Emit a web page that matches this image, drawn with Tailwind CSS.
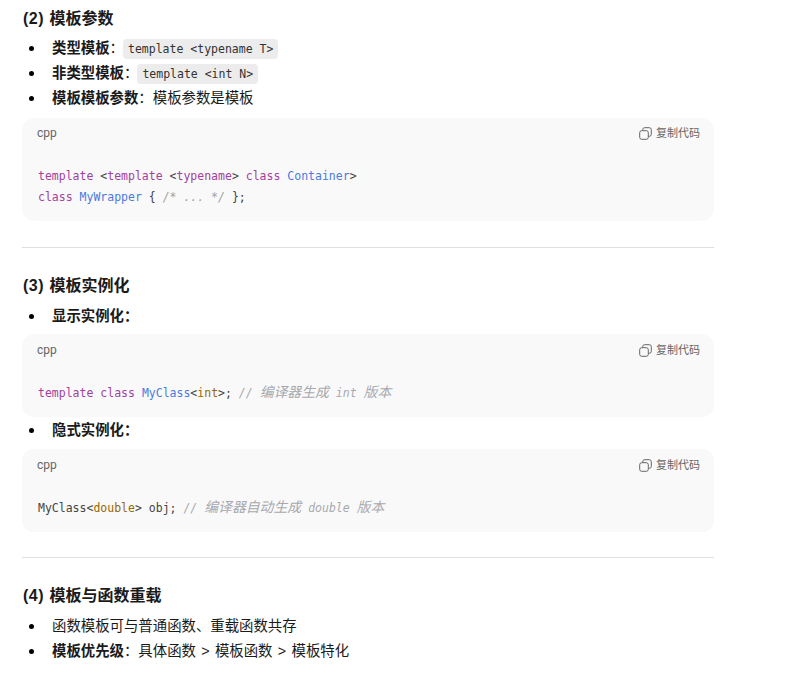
<!DOCTYPE html>
<html lang="zh">
<head>
<meta charset="utf-8">
<script src="https://cdn.jsdelivr.net/npm/@tailwindcss/browser@4"></script>
</head>
<body class="bg-white">
<main class="w-[786px] h-[683px] overflow-hidden pl-[22px] pr-[72px] text-[14.4px] text-[#1a1a1a] font-['Liberation_Sans','Noto_Sans_CJK_SC',sans-serif]">
  <h3 class="h-[24px] mt-[7px] pl-px leading-[24px] text-[16px] font-bold"><span class="tracking-[0.5px] mr-[1px]">(2)</span> 模板参数</h3>
  <ul class="mt-[5px]">
    <li class="h-[25px] flex items-center"><span class="w-[30px] flex justify-center pr-[11px]"><span class="size-[5.5px] rounded-full bg-black"></span></span><b>类型模板</b>：<code class="ml-[-1px] px-[5px] h-[20px] leading-[20px] rounded-[4px] bg-[#ececec] text-[11.5px] text-[#333] font-['DejaVu_Sans_Mono',monospace]">template &lt;typename T&gt;</code></li>
    <li class="h-[25px] flex items-center"><span class="w-[30px] flex justify-center pr-[11px]"><span class="size-[5.5px] rounded-full bg-black"></span></span><b>非类型模板</b>：<code class="ml-[-1px] px-[5px] h-[20px] leading-[20px] rounded-[4px] bg-[#ececec] text-[11.5px] text-[#333] font-['DejaVu_Sans_Mono',monospace]">template &lt;int N&gt;</code></li>
    <li class="h-[25px] flex items-center"><span class="w-[30px] flex justify-center pr-[11px]"><span class="size-[5.5px] rounded-full bg-black"></span></span><b>模板模板参数</b>：模板参数是模板</li>
  </ul>
  <section class="mt-[7px] h-[103px] rounded-[12px] bg-[#f9f9f9] pl-[15px] pr-[14px]">
    <div class="h-[30px] flex items-center justify-between text-[11px] text-[#666]">
      <span class="text-[12px] font-['Roboto',sans-serif]">cpp</span>
      <span class="flex items-center gap-[4px]"><svg class="size-[13px]" viewBox="0 0 13 13" fill="none" stroke="#666" stroke-width="1"><rect x="0.7" y="3.7" width="8.6" height="8.6" rx="2"/><path d="M3.7 3.5V2.7a2 2 0 0 1 2-2h4.6a2 2 0 0 1 2 2v4.6a2 2 0 0 1-2 2H9.5"/></svg>复制代码</span>
    </div>
    <pre class="mt-[18px] pl-px text-[11.5px] leading-[21px] text-[#444] font-['DejaVu_Sans_Mono',monospace]"><span class="text-[#a23fa0]">template</span> &lt;<span class="text-[#a23fa0]">template</span> &lt;<span class="text-[#a23fa0]">typename</span>&gt; <span class="text-[#a23fa0]">class</span> <span class="text-[#4a7ae0]">Container</span>&gt;
<span class="text-[#a23fa0]">class</span> <span class="text-[#4a7ae0]">MyWrapper</span> { <span class="text-[#a0a1a7] italic">/* ... */</span> };</pre>
  </section>
  <hr class="mt-[26px] border-t border-[#e0e0e0]">
  <h3 class="mt-[26px] pl-px h-[24px] leading-[24px] text-[16px] font-bold"><span class="tracking-[0.5px] mr-[1px]">(3)</span> 模板实例化</h3>
  <ul class="mt-[6px]">
    <li class="h-[25px] flex items-center"><span class="w-[30px] flex justify-center pr-[11px]"><span class="size-[5.5px] rounded-full bg-black"></span></span><b>显示实例化</b><b>：</b></li>
  </ul>
  <section class="mt-[5px] h-[83px] rounded-[12px] bg-[#f9f9f9] pl-[15px] pr-[14px]">
    <div class="h-[32px] flex items-center justify-between text-[11px] text-[#666]">
      <span class="text-[12px] font-['Roboto',sans-serif]">cpp</span>
      <span class="flex items-center gap-[4px]"><svg class="size-[13px]" viewBox="0 0 13 13" fill="none" stroke="#666" stroke-width="1"><rect x="0.7" y="3.7" width="8.6" height="8.6" rx="2"/><path d="M3.7 3.5V2.7a2 2 0 0 1 2-2h4.6a2 2 0 0 1 2 2v4.6a2 2 0 0 1-2 2H9.5"/></svg>复制代码</span>
    </div>
    <pre class="mt-[16px] pl-px text-[11.5px] leading-[21px] text-[#444] font-['DejaVu_Sans_Mono','Noto_Sans_CJK_SC',monospace]"><span class="text-[#a23fa0]">template</span> <span class="text-[#a23fa0]">class</span> <span class="text-[#4a7ae0]">MyClass</span>&lt;<span class="text-[#986801]">int</span>&gt;; <span class="text-[#a8a9ae] italic">// <span class="text-[13.86px]">编译器生成</span> int <span class="text-[13.86px]">版本</span></span></pre>
  </section>
  <ul class="mt-px">
    <li class="h-[25px] flex items-center"><span class="w-[30px] flex justify-center pr-[11px]"><span class="size-[5.5px] rounded-full bg-black"></span></span><b>隐式实例化</b><b>：</b></li>
  </ul>
  <section class="mt-[6px] h-[83px] rounded-[12px] bg-[#f9f9f9] pl-[15px] pr-[14px]">
    <div class="h-[32px] flex items-center justify-between text-[11px] text-[#666]">
      <span class="text-[12px] font-['Roboto',sans-serif]">cpp</span>
      <span class="flex items-center gap-[4px]"><svg class="size-[13px]" viewBox="0 0 13 13" fill="none" stroke="#666" stroke-width="1"><rect x="0.7" y="3.7" width="8.6" height="8.6" rx="2"/><path d="M3.7 3.5V2.7a2 2 0 0 1 2-2h4.6a2 2 0 0 1 2 2v4.6a2 2 0 0 1-2 2H9.5"/></svg>复制代码</span>
    </div>
    <pre class="mt-[16px] pl-px text-[11.5px] leading-[21px] text-[#444] font-['DejaVu_Sans_Mono','Noto_Sans_CJK_SC',monospace]">MyClass&lt;<span class="text-[#986801]">double</span>&gt; obj; <span class="text-[#a8a9ae] italic">// <span class="text-[13.86px]">编译器自动生成</span> double <span class="text-[13.86px]">版本</span></span></pre>
  </section>
  <hr class="mt-[25px] border-t border-[#e0e0e0]">
  <h3 class="mt-[26px] pl-px h-[24px] leading-[24px] text-[16px] font-bold"><span class="tracking-[0.5px] mr-[1px]">(4)</span> 模板与函数重载</h3>
  <ul class="mt-[6px]">
    <li class="h-[25px] flex items-center"><span class="w-[30px] flex justify-center pr-[11px]"><span class="size-[5.5px] rounded-full bg-black"></span></span>函数模板可与普通函数、重载函数共存</li>
    <li class="h-[25px] flex items-center"><span class="w-[30px] flex justify-center pr-[11px]"><span class="size-[5.5px] rounded-full bg-black"></span></span><b>模板优先级</b><span class="[word-spacing:1.3px]">：具体函数 &gt; 模板函数 &gt; 模板特化</span></li>
  </ul>
</main>
</body>
</html>
